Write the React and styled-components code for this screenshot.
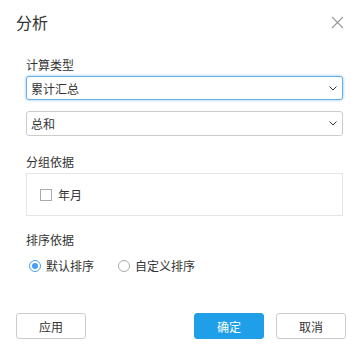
import React, { useState } from 'react';
import styled, { createGlobalStyle } from 'styled-components';

const GlobalStyle = createGlobalStyle`
    html, body {
        margin: 0;
        padding: 0;
        background: #ffffff;
    }
    body {
        font-family: "Noto Sans CJK SC", "Liberation Sans", sans-serif;
        font-size: 12px;
        color: #333;
    }
`;

const Dialog = styled.div`
    width: 363px;
    height: 355px;
    box-sizing: border-box;
    background: #fff;
    display: flex;
    flex-direction: column;
`;

const Header = styled.div`
    display: flex;
    justify-content: space-between;
    align-items: center;
    padding: 12px 19px 0 16px;
    height: 20px;
`;

const Title = styled.div`
    font-size: 16px;
    line-height: 20px;
    color: #333;
`;

const CloseButton = styled.button`
    border: none;
    background: none;
    padding: 0;
    width: 13px;
    height: 13px;
    display: flex;
    cursor: pointer;
`;

const Body = styled.div`
    padding: 0 20px 0 26px;
    display: flex;
    flex-direction: column;
`;

const Label = styled.div`
    font-size: 12px;
    line-height: 16px;
    color: #333;
    margin-top: ${p => p.$top}px;
    margin-bottom: ${p => p.$bottom}px;
`;

const SelectBox = styled.div`
    position: relative;
    height: ${p => p.$height}px;
    box-sizing: border-box;
    border: 1px solid ${p => (p.$focused ? '#66afe9' : '#ccc')};
    border-radius: 3px;
    box-shadow: ${p => (p.$focused ? '0 0 3px rgba(102, 175, 233, 0.8)' : 'none')};
    margin-bottom: ${p => p.$bottom || 0}px;
    display: flex;
    align-items: center;
    justify-content: space-between;
    padding: 0 5px 0 4px;
    color: #333;
    background: #fff;
`;

const GroupBox = styled.div`
    height: 43px;
    box-sizing: border-box;
    border: 1px solid #e5e5e5;
    display: flex;
    align-items: center;
    padding: 0 13px;
`;

const CheckLabel = styled.label`
    display: flex;
    align-items: center;
    gap: 6px;
    cursor: pointer;
`;

const CheckSquare = styled.span`
    width: 12px;
    height: 12px;
    box-sizing: border-box;
    border: 1px solid #aaa;
    background: #fff;
    display: inline-block;
`;

const RadioRow = styled.div`
    display: flex;
    align-items: center;
    gap: 24px;
    padding-left: 3px;
    margin-top: 9px;
`;

const RadioLabel = styled.label`
    display: flex;
    align-items: center;
    gap: 5px;
    cursor: pointer;
`;

const RadioCircle = styled.span`
    width: 12px;
    height: 12px;
    box-sizing: border-box;
    border-radius: 50%;
    border: 1px solid ${p => (p.$checked ? '#4a9ff5' : '#aaa')};
    display: flex;
    align-items: center;
    justify-content: center;

    &::after {
        content: '';
        width: 6px;
        height: 6px;
        border-radius: 50%;
        background: ${p => (p.$checked ? '#4a9ff5' : 'transparent')};
    }
`;

const Footer = styled.div`
    margin-top: auto;
    padding: 0 17px 16px 16px;
    display: flex;
    align-items: center;
`;

const Button = styled.button`
    width: 70px;
    height: 26px;
    box-sizing: border-box;
    border-radius: 3px;
    font-family: inherit;
    font-size: 12px;
    cursor: pointer;
    border: 1px solid ${p => (p.$primary ? '#1e9fe8' : '#ccc')};
    background: ${p => (p.$primary ? '#1e9fe8' : '#fff')};
    color: ${p => (p.$primary ? '#fff' : '#333')};
    margin-left: ${p => p.$left || 0}px;
`;

const Spacer = styled.div`
    flex: 1;
`;

const Chevron = () => (
    <svg width="8" height="5" viewBox="0 0 8 5">
        <path d="M0.5 0.5 L4 4 L7.5 0.5" fill="none" stroke="#333" strokeWidth="1" />
    </svg>
);

const App = () => {
    const [sort, setSort] = useState('default');
    const [checked, setChecked] = useState(false);

    return (
        <>
            <GlobalStyle />
            <Dialog>
                <Header>
                    <Title>分析</Title>
                    <CloseButton aria-label="close">
                        <svg width="13" height="13" viewBox="0 0 13 13">
                            <path d="M1 1 L12 12 M12 1 L1 12" stroke="#999" strokeWidth="1.1" />
                        </svg>
                    </CloseButton>
                </Header>
                <Body>
                    <Label $top={25} $bottom={3}>计算类型</Label>
                    <SelectBox $focused $height={24} $bottom={11}>
                        <span>累计汇总</span>
                        <Chevron />
                    </SelectBox>
                    <SelectBox $height={25}>
                        <span>总和</span>
                        <Chevron />
                    </SelectBox>
                    <Label $top={18} $bottom={3}>分组依据</Label>
                    <GroupBox>
                        <CheckLabel onClick={() => setChecked(!checked)}>
                            <CheckSquare />
                            <span>年月</span>
                        </CheckLabel>
                    </GroupBox>
                    <Label $top={16} $bottom={0}>排序依据</Label>
                    <RadioRow>
                        <RadioLabel onClick={() => setSort('default')}>
                            <RadioCircle $checked={sort === 'default'} />
                            <span>默认排序</span>
                        </RadioLabel>
                        <RadioLabel onClick={() => setSort('custom')}>
                            <RadioCircle $checked={sort === 'custom'} />
                            <span>自定义排序</span>
                        </RadioLabel>
                    </RadioRow>
                </Body>
                <Footer>
                    <Button>应用</Button>
                    <Spacer />
                    <Button $primary>确定</Button>
                    <Button $left={12}>取消</Button>
                </Footer>
            </Dialog>
        </>
    );
};

export default App;
